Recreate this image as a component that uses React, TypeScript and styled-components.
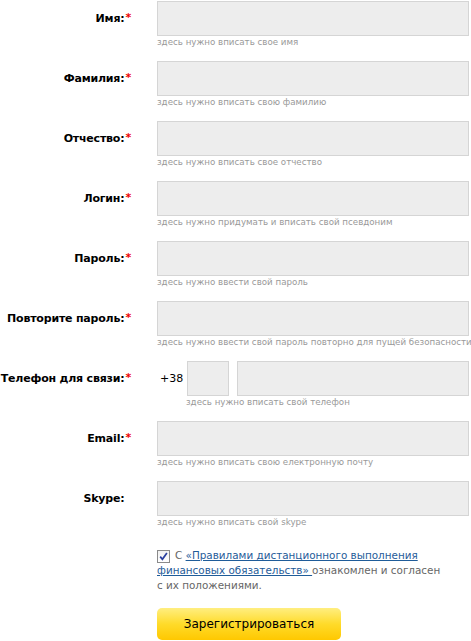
import React, { useState } from "react";
import styled, { createGlobalStyle } from "styled-components";

const Global = createGlobalStyle`
  html, body { margin: 0; padding: 0; background: #fff; }
  body { font-family: "DejaVu Sans", Verdana, sans-serif; }
`;

const Form = styled.form`
  width: 471px;
  padding-top: 1px;
  overflow: hidden;
`;

const Row = styled.div`
  display: grid;
  grid-template-columns: 157px 312px;
  margin-bottom: 13px;
`;

const Label = styled.label`
  height: 35px;
  display: flex;
  align-items: center;
  justify-content: flex-end;
  padding-right: 26px;
  font-size: 11px;
  font-weight: bold;
  color: #000;
  white-space: nowrap;
  letter-spacing: -0.2px;
`;

const Star = styled.span<{ $hidden?: boolean }>`
  color: #e00;
  visibility: ${(p) => (p.$hidden ? "hidden" : "visible")};
  font-weight: bold;
  margin-left: 1px;
  align-self: flex-start;
  margin-top: 10px;
`;

const Field = styled.div`
  display: flex;
  flex-direction: column;
`;

const Inputs = styled.div`
  display: flex;
  align-items: center;
`;

const Input = styled.input<{ $w?: number }>`
  box-sizing: border-box;
  height: 35px;
  width: ${(p) => (p.$w ? `${p.$w}px` : "312px")};
  background: #ededed;
  border: 1px solid #d5d5d5;
  margin: 0;
  padding: 0 6px;
  outline: none;
`;

const Prefix = styled.span`
  font-size: 11px;
  color: #000;
  margin-left: 3px;
  margin-right: 4px;
`;

const Gap = styled.span`
  width: 8px;
`;

const Hint = styled.div<{ $indent?: number }>`
  margin-left: ${(p) => p.$indent ?? 0}px;
  font-size: 8.7px;
  line-height: 12px;
  color: #999;
  white-space: nowrap;
`;

const Agree = styled.div`
  margin: 20px 0 0 157px;
  width: 286px;
  font-size: 10.4px;
  line-height: 15px;
  color: #666;
`;

const Box = styled.span`
  display: inline-flex;
  align-items: center;
  justify-content: center;
  box-sizing: border-box;
  width: 13px;
  height: 13px;
  margin-right: 5px;
  vertical-align: -2px;
  border: 1px solid #8a8a8a;
  background: linear-gradient(to bottom, #f0f0f0, #ffffff);
  cursor: pointer;
`;

const Link = styled.a`
  color: #1f5c99;
  text-decoration: underline;
`;

const Button = styled.button`
  display: block;
  margin: 15px 0 0 157px;
  width: 184px;
  height: 32px;
  border: none;
  border-radius: 5px;
  background: linear-gradient(to bottom, #ffee80 0%, #ffdb2a 50%, #ffc800 100%);
  font-family: "DejaVu Sans", Verdana, sans-serif;
  font-size: 12px;
  color: #000;
  cursor: pointer;
`;

type F = { label: string; hint: string; req: boolean };

const fields: F[] = [
  { label: "Имя:", hint: "здесь нужно вписать свое имя", req: true },
  { label: "Фамилия:", hint: "здесь нужно вписать свою фамилию", req: true },
  { label: "Отчество:", hint: "здесь нужно вписать свое отчество", req: true },
  { label: "Логин:", hint: "здесь нужно придумать и вписать свой псевдоним", req: true },
  { label: "Пароль:", hint: "здесь нужно ввести свой пароль", req: true },
  { label: "Повторите пароль:", hint: "здесь нужно ввести свой пароль повторно для пущей безопасности", req: true },
];

const after: F[] = [
  { label: "Email:", hint: "здесь нужно вписать свою електронную почту", req: true },
  { label: "Skype:", hint: "здесь нужно вписать свой skype", req: false },
];

const FieldRow = ({ f }: { f: F }) => (
  <Row>
    <Label>
      {f.label}
      <Star $hidden={!f.req}>*</Star>
    </Label>
    <Field>
      <Input />
      <Hint>{f.hint}</Hint>
    </Field>
  </Row>
);

export default function App() {
  const [checked, setChecked] = useState(true);
  return (
    <>
      <Global />
      <Form onSubmit={(e) => e.preventDefault()}>
        {fields.map((f) => (
          <FieldRow key={f.label} f={f} />
        ))}
        <Row>
          <Label>
            Телефон для связи:<Star>*</Star>
          </Label>
          <Field>
            <Inputs>
              <Prefix>+38</Prefix>
              <Input $w={42} />
              <Gap />
              <Input $w={232} />
            </Inputs>
            <Hint $indent={29}>здесь нужно вписать свой телефон</Hint>
          </Field>
        </Row>
        {after.map((f) => (
          <FieldRow key={f.label} f={f} />
        ))}
        <Agree>
          <Box role="checkbox" aria-checked={checked} onClick={() => setChecked(!checked)}>
            {checked && (
              <svg width="9" height="9" viewBox="0 0 9 9">
                <path d="M1.2 4.6 L3.4 7.3 L7.9 0.9" fill="none" stroke="#2a3f9e" strokeWidth="1.7" />
              </svg>
            )}
          </Box>
          С{" "}
          <Link href="#">«Правилами дистанционного выполнения финансовых обязательств» </Link>
          ознакомлен и согласен с их положениями.
        </Agree>
        <Button type="submit">Зарегистрироваться</Button>
      </Form>
    </>
  );
}
